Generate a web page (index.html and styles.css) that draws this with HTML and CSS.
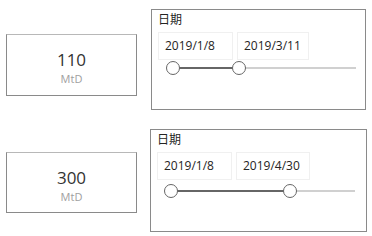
FILE: index.html
```html
<!DOCTYPE html>
<html>
<head>
<meta charset="utf-8">
<link rel="stylesheet" href="styles.css">
</head>
<body>
<div class="page">
  <div class="row">
    <div class="card">
      <div class="value">110</div>
      <div class="label">MtD</div>
    </div>
    <div class="slicer">
      <div class="title">日期</div>
      <div class="dates">
        <div class="date">2019/1/8</div>
        <div class="date">2019/3/11</div>
      </div>
      <div class="slider">
        <div class="track" style="left:15px"></div>
        <div class="fill" style="left:15px;width:66px"></div>
        <div class="handle" style="left:15px"></div>
        <div class="handle" style="left:81px"></div>
      </div>
    </div>
  </div>
  <div class="row row2">
    <div class="card">
      <div class="value">300</div>
      <div class="label">MtD</div>
    </div>
    <div class="slicer">
      <div class="title">日期</div>
      <div class="dates">
        <div class="date">2019/1/8</div>
        <div class="date">2019/4/30</div>
      </div>
      <div class="slider">
        <div class="track" style="left:14px"></div>
        <div class="fill" style="left:14px;width:119px"></div>
        <div class="handle" style="left:14px"></div>
        <div class="handle" style="left:133px"></div>
      </div>
    </div>
  </div>
</div>
</body>
</html>
```
FILE: styles.css
```css
html, body {
  margin: 0;
  padding: 0;
  background: #fff;
  width: 372px;
  height: 236px;
  overflow: hidden;
  font-family: "Open Sans", "Noto Sans", "Noto Sans CJK SC", sans-serif;
  color: #252423;
}
.page {
  padding: 9px 0 0 6px;
  display: flex;
  flex-direction: column;
  gap: 19px;
}
.row {
  display: flex;
  align-items: flex-start;
  gap: 14px;
}
.card {
  box-sizing: border-box;
  width: 131px;
  height: 62px;
  margin-top: 25px;
  border: 1px solid #8a8a8a;
  border-top-color: #b8b8b8;
  display: flex;
  flex-direction: column;
  align-items: center;
  padding-top: 14px;
}
.row2 .card {
  margin-top: 23px;
  height: 61px;
}
.value {
  font-size: 17px;
  line-height: 22px;
  color: #333;
}
.label {
  font-size: 11px;
  line-height: 14px;
  margin-top: 1px;
  color: #a0a0a0;
}
.slicer {
  box-sizing: border-box;
  width: 215px;
  height: 101px;
  border: 1px solid #8a8a8a;
  padding: 2px 0 0 6px;
}
.row2 .slicer {
  height: 103px;
  width: 217px;
  margin-left: -1px;
}
.title {
  font-size: 12px;
  line-height: 16px;
  color: #252423;
}
.dates {
  display: flex;
  gap: 4px;
  margin-top: 4px;
}
.date {
  box-sizing: border-box;
  height: 28px;
  width: 75px;
  border: 1px solid #f0f0f0;
  font-size: 12px;
  line-height: 26px;
  padding-left: 6px;
  color: #252423;
}
.date + .date {
  width: 72px;
}
.row2 .date + .date {
  width: 74px;
}
.slider {
  position: relative;
  height: 16px;
  width: 198px;
}
.row2 .slider {
  margin-top: 3px;
}
.track {
  position: absolute;
  right: 0;
  top: 7px;
  height: 2px;
  background: #d0d0d0;
}
.fill {
  position: absolute;
  top: 7px;
  height: 2px;
  background: #666;
}
.handle {
  position: absolute;
  top: 1px;
  width: 14px;
  height: 14px;
  margin-left: -7px;
  box-sizing: border-box;
  border: 1.5px solid #666;
  border-radius: 50%;
  background: #fff;
}
```
